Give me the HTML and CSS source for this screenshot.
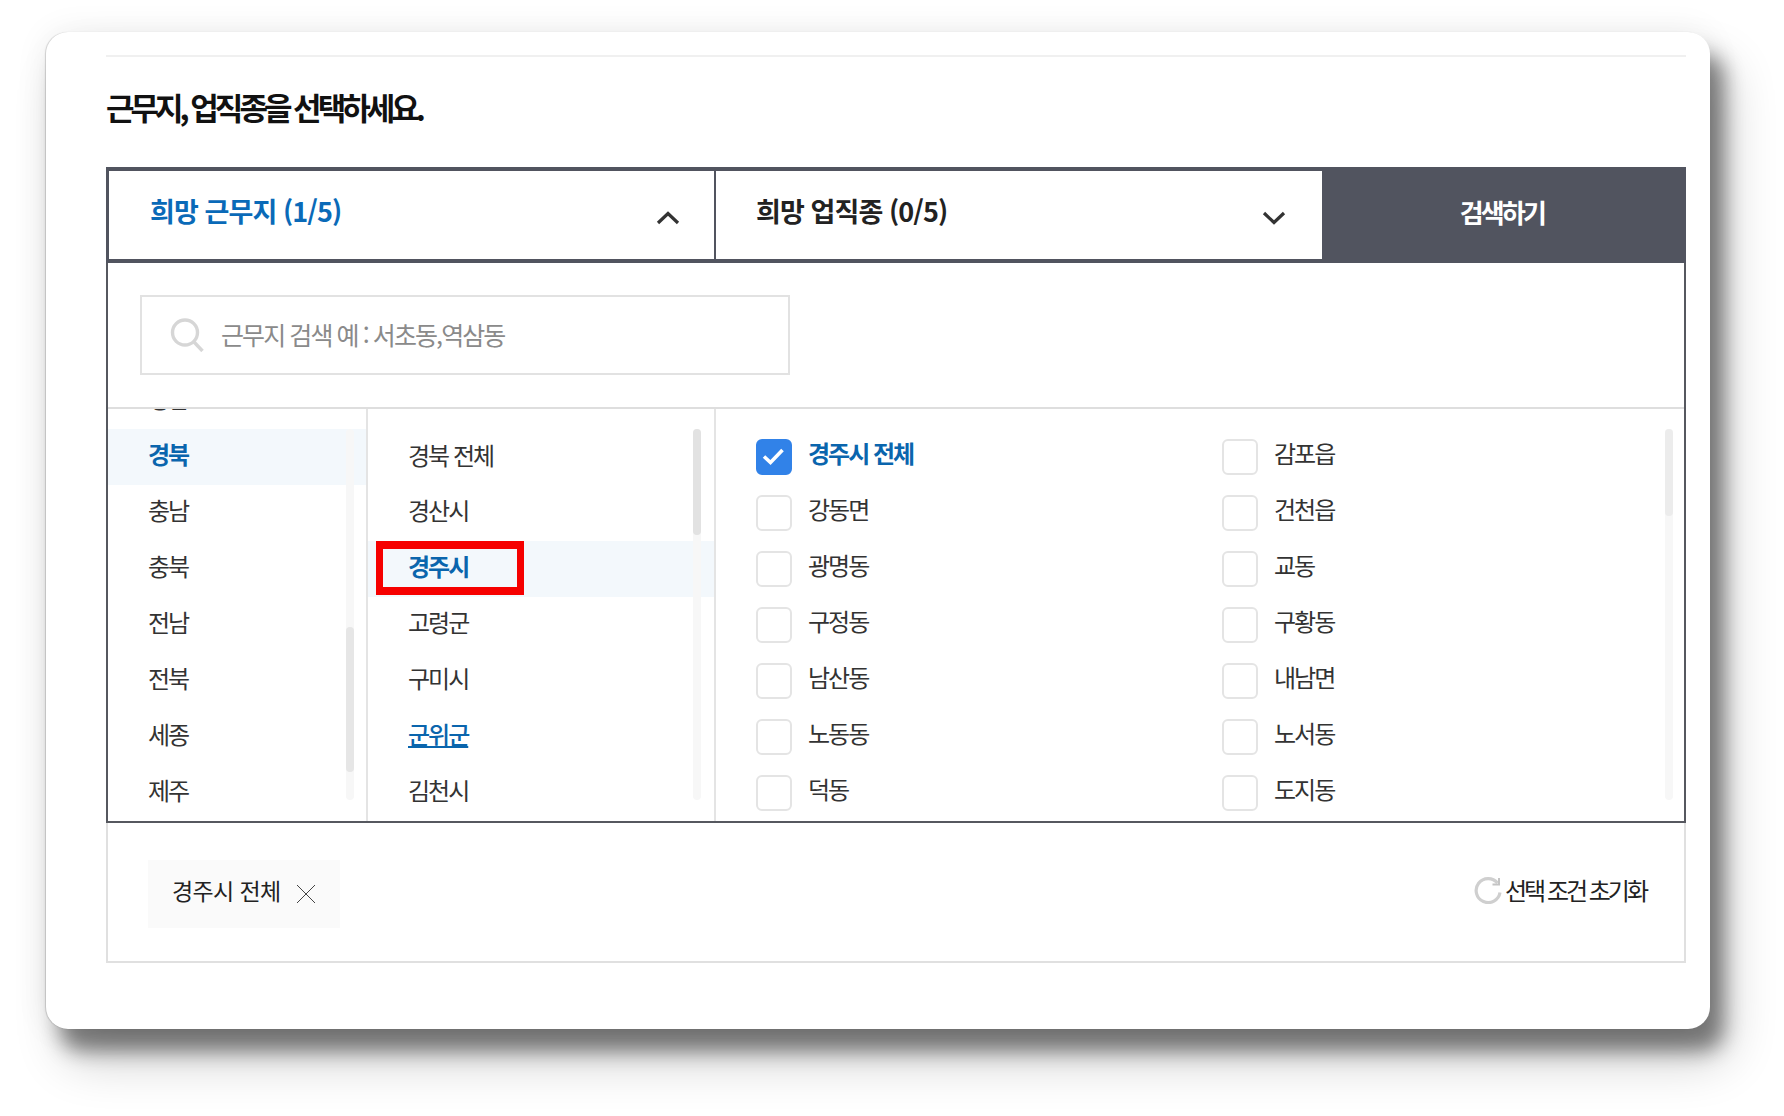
FILE: index.html
```html
<!DOCTYPE html>
<html lang="ko">
<head>
<meta charset="utf-8">
<title>근무지, 업직종 선택</title>
<link rel="stylesheet" href="styles.css">
</head>
<body>
<main class="card">
  <div class="rule"></div>
  <h2 class="title">근무지, 업직종을 선택하세요.</h2>
  <div class="tabs">
    <div class="tab tab-active">
      <span>희망 근무지 (1/5)</span>
      <svg class="chev" viewBox="0 0 24 14"><path d="M2 12 12 2.500 22 12"/></svg>
    </div>
    <div class="tab tab-second">
      <span>희망 업직종 (0/5)</span>
      <svg class="chev" viewBox="0 0 24 14"><path d="M2 2 12 11.500 22 2"/></svg>
    </div>
    <div class="search-btn">검색하기</div>
  </div>
  <section class="panel">
    <div class="search-row">
      <div class="search-box">
        <svg class="search-icon" viewBox="0 0 34 34"><circle cx="15" cy="14.500" r="12.500"/><path d="M24 24 32.500 33"/></svg>
        <span>근무지 검색 예 : 서초동,역삼동</span>
      </div>
    </div>
    <div class="lists">
      <div class="col col-a">
        <ul class="list list-clip">
          <li>경남</li>
          <li class="on">경북</li>
          <li>충남</li>
          <li>충북</li>
          <li>전남</li>
          <li>전북</li>
          <li>세종</li>
          <li>제주</li>
        </ul>
        <div class="track"><div class="thumb thumb-a"></div></div>
      </div>
      <div class="col col-b">
        <ul class="list">
          <li class="first">경북 전체</li>
          <li>경산시</li>
          <li class="on">경주시<span class="mark"></span></li>
          <li>고령군</li>
          <li>구미시</li>
          <li class="link">군위군</li>
          <li>김천시</li>
        </ul>
        <div class="track"><div class="thumb thumb-b"></div></div>
      </div>
      <div class="col col-c">
        <div class="checks">
          <label class="check sel"><i class="box"><svg viewBox="0 0 32 32"><path d="M6 15.500 12.500 21.500 24.500 9"/></svg></i><span>경주시 전체</span></label>
          <label class="check"><i class="box"></i><span>감포읍</span></label>
          <label class="check"><i class="box"></i><span>강동면</span></label>
          <label class="check"><i class="box"></i><span>건천읍</span></label>
          <label class="check"><i class="box"></i><span>광명동</span></label>
          <label class="check"><i class="box"></i><span>교동</span></label>
          <label class="check"><i class="box"></i><span>구정동</span></label>
          <label class="check"><i class="box"></i><span>구황동</span></label>
          <label class="check"><i class="box"></i><span>남산동</span></label>
          <label class="check"><i class="box"></i><span>내남면</span></label>
          <label class="check"><i class="box"></i><span>노동동</span></label>
          <label class="check"><i class="box"></i><span>노서동</span></label>
          <label class="check"><i class="box"></i><span>덕동</span></label>
          <label class="check"><i class="box"></i><span>도지동</span></label>
        </div>
        <div class="track"><div class="thumb thumb-c"></div></div>
      </div>
    </div>
  </section>
  <footer class="foot">
    <div class="chip">
      <span>경주시 전체</span>
      <svg viewBox="0 0 20 20"><path d="M1 1 19 19M19 1 1 19"/></svg>
    </div>
    <div class="reset">
      <svg viewBox="0 0 28 28"><path d="M23.500 7A12 12 0 1 0 26 16.500"/><path class="tip" d="M25 2V8.500H18.500"/></svg>
      <span>선택 조건 초기화</span>
    </div>
  </footer>
</main>
</body>
</html>
```

FILE: styles.css
```css
* { box-sizing: border-box; }
html, body { margin: 0; padding: 0; background: #fff; }
body {
  width: 1784px;
  height: 1116px;
  overflow: hidden;
  font-family: "Noto Sans CJK KR", "Noto Sans", sans-serif;
  color: #333;
}
ul { list-style: none; margin: 0; padding: 0; }

.card {
  width: 1664px;
  height: 997px;
  margin: 32px 0 0 46px;
  padding: 23px 24px 66px 60px;
  background: #fff;
  border-radius: 22px;
  box-shadow:
    -1px 0 1px rgba(0,0,0,.16),
    14px 22px 20px rgba(0,0,0,.44),
    18px 32px 50px rgba(0,0,0,.2),
    0 0 34px rgba(0,0,0,.07);
}
.rule { height: 2px; background: #f0f0f0; }
.title {
  display: flex;
  align-items: center;
  height: 110px;
  margin: 0;
  padding-bottom: 11px;
  font-size: 31px;
  font-weight: 700;
  letter-spacing: -4px;
  color: #111;
}

.tabs { display: flex; height: 96px; }
.tab {
  display: flex;
  align-items: center;
  justify-content: space-between;
  padding-left: 40px;
  background: #fff;
  border-top: 4px solid #51545f;
  border-bottom: 4px solid #51545f;
  font-size: 27px;
  font-weight: 700;
  letter-spacing: -0.9px;
  color: #222;
}
.tab span { padding-bottom: 9px; }
.tab-active {
  width: 610px;
  padding-left: 41px;
  padding-right: 34px;
  border-left: 3px solid #51545f;
  border-right: 2px solid #51545f;
  color: #0a6ab8;
}
.tab-second { width: 606px; padding-right: 36px; }
.chev {
  width: 24px;
  height: 14px;
  margin-top: 6px;
  fill: none;
  stroke: #333;
  stroke-width: 3.2;
}
.search-btn {
  display: flex;
  align-items: center;
  justify-content: center;
  flex: 1;
  padding: 0 4px 8px 0;
  background: #51545f;
  color: #fff;
  font-size: 26px;
  font-weight: 700;
  letter-spacing: -2.8px;
}

.panel {
  height: 560px;
  border-left: 2px solid #56585f;
  border-right: 2px solid #56585f;
  border-bottom: 2px solid #56585f;
}
.search-row { padding: 32px; border-bottom: 2px solid #dedede; }
.search-box {
  display: flex;
  align-items: center;
  gap: 17px;
  width: 650px;
  height: 80px;
  padding: 0 0 0 28px;
  border: 2px solid #e2e2e2;
  color: #8a8a8a;
  font-size: 25px;
  letter-spacing: -1.92px;
}
.search-box span { padding-bottom: 2px; }
.search-icon {
  width: 34px;
  height: 34px;
  flex: none;
  fill: none;
  stroke: #d6d6d6;
  stroke-width: 3.4;
}

.lists { display: flex; height: 412px; }
.col { position: relative; overflow: hidden; }
.col-a { width: 260px; border-right: 2px solid #e4e4e4; }
.col-b { width: 348px; border-right: 2px solid #e4e4e4; }
.col-c { flex: 1; }
.list { padding-top: 20px; }
.list-clip { padding-top: 0; margin-top: -36px; }
.list li {
  position: relative;
  display: flex;
  align-items: center;
  height: 56px;
  padding-bottom: 8px;
  font-size: 24px;
  letter-spacing: -2px;
}
.col-a li { padding-left: 40px; }
.col-b li { padding-left: 40px; }
.col-b li.first { padding-bottom: 6px; }
.list li.on { background: #f3f8fc; color: #0a65ad; font-weight: 700; }
.list li.link { color: #0a65ad; font-weight: 500; text-decoration: underline; }
.mark {
  position: absolute;
  left: 8px;
  top: 0;
  width: 148px;
  height: 54px;
  border: solid #f60000;
  border-width: 8px 7px;
}
.track {
  position: absolute;
  top: 20px;
  width: 8px;
  height: 371px;
  border-radius: 4px;
  background: #f7f7f7;
}
.col-a .track { right: 12px; }
.col-b .track { right: 13px; }
.col-c .track { right: 11px; }
.thumb { width: 8px; border-radius: 4px; background: #e6e6e6; }
.thumb-a { height: 145px; margin-top: 198px; }
.thumb-b { height: 106px; background: #e2e2e2; }
.thumb-c { height: 87px; background: #ececec; }

.checks {
  display: grid;
  grid-template-columns: 466px 1fr;
  grid-auto-rows: 56px;
  padding: 20px 0 0 40px;
}
.check {
  display: flex;
  align-items: center;
  gap: 16px;
  font-size: 24px;
  letter-spacing: -2px;
}
.check span { padding-bottom: 9px; }
.box {
  display: block;
  flex: none;
  width: 36px;
  height: 36px;
  border: 2px solid #e4e4e4;
  border-radius: 6px;
  background: #fff;
}
.sel { color: #0a65ad; font-weight: 700; }
.sel .box { border-color: #3182e8; background: #3182e8; }
.box svg { display: block; width: 32px; height: 32px; fill: none; stroke: #fff; stroke-width: 3.6; }

.foot {
  display: flex;
  align-items: center;
  justify-content: space-between;
  height: 140px;
  padding: 4px 38px 0 40px;
  border-left: 2px solid #e0e0e0;
  border-right: 2px solid #e0e0e0;
  border-bottom: 2px solid #e0e0e0;
}
.chip {
  display: flex;
  align-items: center;
  gap: 15px;
  width: 192px;
  height: 68px;
  padding: 0 0 0 24px;
  background: #fafafa;
  font-size: 23px;
  letter-spacing: -0.6px;
  color: #222;
}
.chip span { padding-bottom: 8px; }
.chip svg { width: 20px; height: 20px; fill: none; stroke: #444; stroke-width: 1; }
.reset {
  display: flex;
  align-items: center;
  gap: 3px;
  margin-top: -8px;
  font-size: 24px;
  letter-spacing: -3px;
  color: #222;
}
.reset span { padding-bottom: 2px; }
.reset svg { width: 28px; height: 28px; fill: none; stroke: #cfcfcf; stroke-width: 3.2; }
.reset .tip { stroke: #c4c4c4; stroke-width: 2; }
```
